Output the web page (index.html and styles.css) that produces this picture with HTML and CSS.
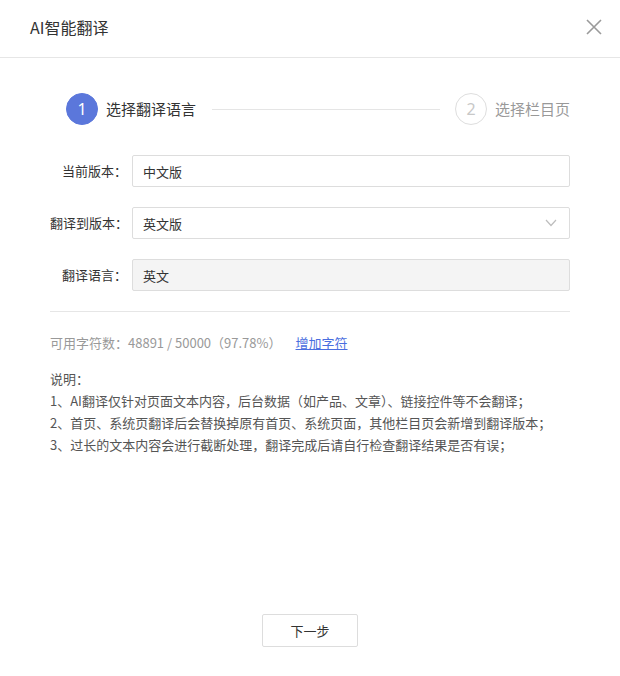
FILE: index.html
```html
<!DOCTYPE html>
<html lang="zh-CN">
<head>
<meta charset="utf-8">
<title>AI智能翻译</title>
<link rel="stylesheet" href="styles.css">
</head>
<body>
<div class="modal">
  <div class="modal-header">
    <div class="modal-title">AI智能翻译</div>
    <button class="close-btn" aria-label="关闭">
      <svg width="16" height="16" viewBox="0 0 16 16"><path d="M1 1 L15 15 M15 1 L1 15" stroke="#9a9a9a" stroke-width="1.6" fill="none"/></svg>
    </button>
  </div>
  <div class="modal-body">
    <div class="steps">
      <div class="step active">
        <span class="step-num">1</span>
        <span class="step-text">选择翻译语言</span>
      </div>
      <div class="step-line"></div>
      <div class="step">
        <span class="step-num">2</span>
        <span class="step-text">选择栏目页</span>
      </div>
    </div>

    <div class="form">
      <div class="form-row">
        <label class="form-label">当前版本：</label>
        <div class="field">中文版</div>
      </div>
      <div class="form-row">
        <label class="form-label">翻译到版本：</label>
        <div class="field select">
          <span>英文版</span>
          <svg class="arrow" width="12" height="8" viewBox="0 0 12 8"><path d="M1 1 L6 6.5 L11 1" stroke="#bdbdbd" stroke-width="1.2" fill="none"/></svg>
        </div>
      </div>
      <div class="form-row">
        <label class="form-label">翻译语言：</label>
        <div class="field disabled">英文</div>
      </div>
    </div>

    <div class="divider"></div>

    <div class="quota">可用字符数：48891 / 50000（97.78%）<a class="quota-link" href="#">增加字符</a></div>

    <div class="notes">
      <p>说明：</p>
      <p>1、AI翻译仅针对页面文本内容，后台数据（如产品、文章）、链接控件等不会翻译；</p>
      <p>2、首页、系统页翻译后会替换掉原有首页、系统页面，其他栏目页会新增到翻译版本；</p>
      <p>3、过长的文本内容会进行截断处理，翻译完成后请自行检查翻译结果是否有误；</p>
    </div>
  </div>
  <div class="modal-footer">
    <button class="btn">下一步</button>
  </div>
</div>
</body>
</html>
```

FILE: styles.css
```css
* { box-sizing: border-box; }
html, body {
  margin: 0;
  padding: 0;
  background: #fff;
}
body {
  font-family: "Microsoft YaHei", "Noto Sans CJK SC", "Noto Sans", sans-serif;
  color: #333;
  font-size: 13px;
}
.modal {
  width: 620px;
  height: 676px;
  display: flex;
  flex-direction: column;
  background: #fff;
}
.modal-header {
  height: 58px;
  border-bottom: 1px solid #e6e6e6;
  display: flex;
  align-items: center;
  justify-content: space-between;
  padding: 0 18px 4px 30px;
}
.modal-title {
  font-size: 16px;
  line-height: 22px;
  color: #333;
}
.close-btn {
  border: 0;
  background: none;
  padding: 0;
  width: 16px;
  height: 16px;
  display: flex;
  cursor: pointer;
}
.modal-body {
  flex: 1;
  padding: 35px 50px 0 50px;
}
.steps {
  display: flex;
  align-items: center;
  padding-left: 16px;
  height: 32px;
}
.step {
  display: flex;
  align-items: center;
}
.step-num {
  width: 32px;
  height: 32px;
  border-radius: 50%;
  border: 1px solid #dedede;
  color: #c8c8c8;
  font-size: 16px;
  display: flex;
  align-items: center;
  justify-content: center;
  font-family: "Microsoft YaHei", "Noto Sans", sans-serif;
}
.step-text {
  margin-left: 8px;
  font-size: 15px;
  line-height: 20px;
  color: #999;
}
.step.active .step-num {
  background: #5b77db;
  border-color: #5b77db;
  color: #fff;
}
.step.active .step-text {
  color: #333;
}
.step-line {
  flex: 1;
  height: 1px;
  background: #e5e5e5;
  margin: 0 15px 0 16px;
}
.form {
  margin-top: 30px;
  display: flex;
  flex-direction: column;
  gap: 20px;
}
.form-row {
  display: flex;
  align-items: center;
}
.form-label {
  width: 77px;
  margin-right: 5px;
  text-align: right;
  white-space: nowrap;
  color: #333;
  line-height: 18px;
}
.field {
  flex: 1;
  height: 32px;
  border: 1px solid #dddddd;
  border-radius: 2px;
  padding: 0 12px 0 10px;
  display: flex;
  align-items: center;
  justify-content: space-between;
  color: #333;
}
.field.disabled {
  background: #f4f4f4;
}
.arrow {
  display: block;
}
.divider {
  height: 1px;
  background: #e6e6e6;
  margin-top: 20px;
}
.quota {
  margin-top: 21px;
  color: #999;
  line-height: 20px;
}
.quota-link {
  margin-left: 14px;
  color: #4a6ee0;
  text-decoration: underline;
}
.notes {
  margin-top: 15px;
  color: #555;
}
.notes p {
  margin: 0;
  line-height: 22px;
}
.modal-footer {
  display: flex;
  justify-content: center;
  padding-bottom: 29px;
}
.btn {
  width: 96px;
  height: 33px;
  border: 1px solid #dddddd;
  border-radius: 2px;
  background: #fff;
  color: #333;
  font-family: inherit;
  font-size: 13px;
  cursor: pointer;
}
```
